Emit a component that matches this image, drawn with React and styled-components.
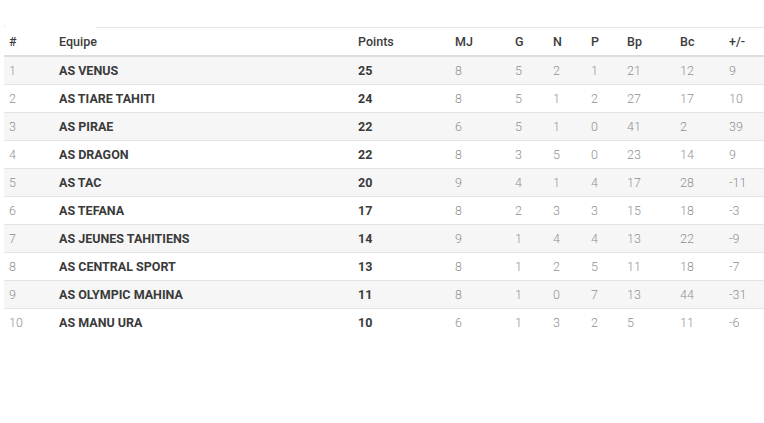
import React from "react";
import styled, { createGlobalStyle } from "styled-components";

const GlobalStyle = createGlobalStyle`
  body {
    margin: 0;
    background: #fff;
    font-family: Roboto, "Liberation Sans", sans-serif;
  }
`;

const teams = [
  [1, "AS VENUS", 25, 8, 5, 2, 1, 21, 12, 9],
  [2, "AS TIARE TAHITI", 24, 8, 5, 1, 2, 27, 17, 10],
  [3, "AS PIRAE", 22, 6, 5, 1, 0, 41, 2, 39],
  [4, "AS DRAGON", 22, 8, 3, 5, 0, 23, 14, 9],
  [5, "AS TAC", 20, 9, 4, 1, 4, 17, 28, -11],
  [6, "AS TEFANA", 17, 8, 2, 3, 3, 15, 18, -3],
  [7, "AS JEUNES TAHITIENS", 14, 9, 1, 4, 4, 13, 22, -9],
  [8, "AS CENTRAL SPORT", 13, 8, 1, 2, 5, 11, 18, -7],
  [9, "AS OLYMPIC MAHINA", 11, 8, 1, 0, 7, 13, 44, -31],
  [10, "AS MANU URA", 10, 6, 1, 3, 2, 5, 11, -6],
];

const columns = [
  { label: "#", width: 50 },
  { label: "Equipe", width: 299 },
  { label: "Points", width: 97 },
  { label: "MJ", width: 60 },
  { label: "G", width: 38 },
  { label: "N", width: 38 },
  { label: "P", width: 36 },
  { label: "Bp", width: 53 },
  { label: "Bc", width: 49 },
  { label: "+/-", width: 40 },
];

const Page = styled.div`
  padding: 25px 0 0 4px;
`;

const TabBar = styled.div`
  display: flex;
  height: 3px;
`;

const TabStub = styled.div`
  width: 91px;
  border-left: 1px solid #eee;
`;

const TabLine = styled.div`
  flex: 1;
  border-bottom: 1px solid #e6e6e6;
`;

const Table = styled.table`
  width: 760px;
  border-collapse: collapse;
  table-layout: fixed;
  font-size: 12.5px;
`;

const Th = styled.th`
  text-align: left;
  font-weight: 500;
  color: #3c3c3c;
  height: 27px;
  padding: 0 0 0 5px;
  border-bottom: 2px solid #ddd;
`;

const Row = styled.tr`
  background: ${(p) => (p.$striped ? "#f6f6f6" : "#fff")};
  border-bottom: 1px solid #e4e4e4;

  &:last-child {
    border-bottom: none;
  }
`;

const Td = styled.td`
  height: 27px;
  padding: 0 0 0 5px;
  color: ${(p) => (p.$strong ? "#3a3a3a" : "#909090")};
  font-weight: ${(p) => (p.$strong ? 700 : 300)};
  white-space: nowrap;
`;

export default function App() {
  return (
    <>
      <GlobalStyle />
      <Page>
        <TabBar>
          <TabStub />
          <TabLine />
        </TabBar>
        <Table>
          <colgroup>
            {columns.map((c) => (
              <col key={c.label} style={{ width: c.width }} />
            ))}
          </colgroup>
          <thead>
            <tr>
              {columns.map((c) => (
                <Th key={c.label}>{c.label}</Th>
              ))}
            </tr>
          </thead>
          <tbody>
            {teams.map((t, i) => (
              <Row key={t[0]} $striped={i % 2 === 0}>
                {t.map((v, j) => (
                  <Td key={j} $strong={j === 1 || j === 2}>
                    {v}
                  </Td>
                ))}
              </Row>
            ))}
          </tbody>
        </Table>
      </Page>
    </>
  );
}
